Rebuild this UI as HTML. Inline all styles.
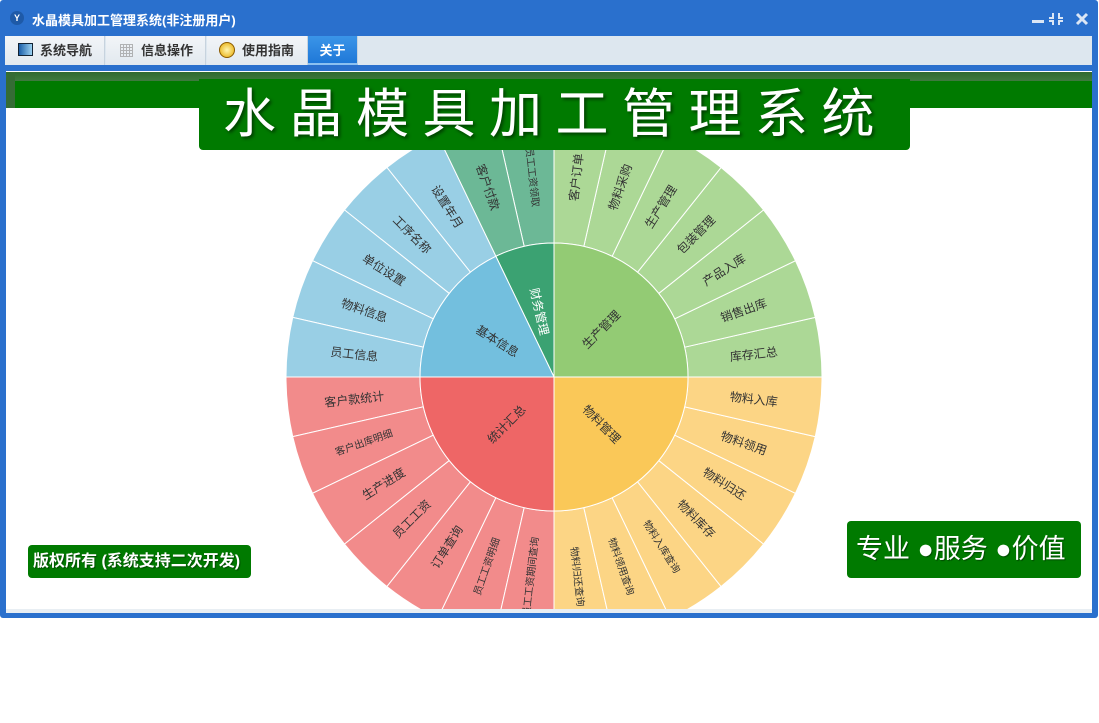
<!DOCTYPE html>
<html><head><meta charset="utf-8"><style>
*{margin:0;padding:0;box-sizing:border-box}
body{width:1099px;height:723px;background:#fff;position:relative;overflow:hidden;font-family:"Liberation Sans","Noto Sans CJK SC",sans-serif}
.win{position:absolute;left:0;top:0;width:1098px;height:618px;background:#2a70cd;border-radius:3px}
.title{position:absolute;left:32px;top:10px;color:#fff;font-size:13px;font-weight:bold}
.logo{position:absolute;left:10px;top:11px;width:14px;height:14px;border-radius:50%;background:#1e5aa8;color:#fff;font-size:9px;font-weight:bold;text-align:center;line-height:14px}
.tabs{position:absolute;left:5px;top:36px;width:1087px;height:29px;background:#dde7ef}
.tab{position:absolute;top:0;height:29px;background:linear-gradient(#f2f5f8,#e2e9ef);border-right:1px solid #c7d3de;font-size:13px;color:#333;line-height:29px;font-weight:bold}
.tab.act{background:linear-gradient(#3b95e8,#1f78d8);color:#fff;border-bottom:2px solid #8cc0f0}
.content{position:absolute;left:6px;top:71px;width:1086px;height:538px;background:#fff;overflow:hidden}
.strip{position:absolute;left:6px;top:609px;width:1086px;height:4px;background:#e8eef3}
.hbar{position:absolute;left:0;top:1px;width:1086px;height:36px;background:#007a00}
.hbar:before{content:"";position:absolute;left:0;top:0;width:1086px;height:9px;background:linear-gradient(#2f6a2f,#3f7a3f)}
.hbar:after{content:"";position:absolute;left:0;top:0;width:9px;height:36px;background:#356c35;border-top-left-radius:8px}
.tbox{position:absolute;left:199px;top:79px;width:711px;height:71px;background:#007a00;border-radius:0 0 4px 4px;color:#fff;font-size:53px;letter-spacing:13.5px;line-height:71px;padding-left:24px;text-shadow:2px 2px 3px rgba(0,0,0,.5);white-space:nowrap;overflow:hidden}
.badge{position:absolute;background:#007a00;color:#fff;border-radius:4px;white-space:nowrap;text-shadow:1px 1px 1px rgba(0,0,0,.4)}
svg text{font-family:"Liberation Sans","Noto Sans CJK SC",sans-serif;fill:#333;font-size:12px}
</style></head><body>
<div class="win">
<div class="logo">Y</div>
<div class="title">水晶模具加工管理系统(非注册用户)</div>
<svg style="position:absolute;left:1030px;top:12px" width="62" height="14" viewBox="0 0 62 14">
<rect x="2" y="8" width="12" height="3" fill="#dbe6f5"/>
<g fill="#dbe6f5"><rect x="22" y="1" width="2" height="5"/><rect x="19" y="5" width="5" height="2"/><rect x="28" y="1" width="2" height="5"/><rect x="28" y="5" width="5" height="2"/><rect x="22" y="8" width="2" height="5"/><rect x="19" y="8" width="5" height="2"/><rect x="28" y="8" width="2" height="5"/><rect x="28" y="8" width="5" height="2"/></g>
<path d="M47 2 L57 12 M57 2 L47 12" stroke="#dbe6f5" stroke-width="3"/>
</svg>
<div class="tabs">
<div class="tab" style="left:0;width:100px"><span style="position:absolute;left:13px;top:7px;width:15px;height:13px;border:1px solid #123;background:linear-gradient(90deg,#1a5ea8,#9ad0f0)"></span><span style="position:absolute;left:35px">系统导航</span></div>
<div class="tab" style="left:101px;width:100px"><span style="position:absolute;left:14px;top:8px;width:13px;height:13px;background:repeating-linear-gradient(90deg,#999 0 1px,transparent 1px 3px),repeating-linear-gradient(0deg,#999 0 1px,transparent 1px 3px);opacity:.7"></span><span style="position:absolute;left:35px">信息操作</span></div>
<div class="tab" style="left:202px;width:101px"><span style="position:absolute;left:12px;top:6px;width:16px;height:16px;border-radius:50%;background:radial-gradient(#fff6b0,#e6a800);border:1px solid #8a5a00"></span><span style="position:absolute;left:35px">使用指南</span></div>
<div class="tab act" style="left:303px;width:50px;text-align:center">关于</div>
</div>
</div>
<div class="content">
<svg style="position:absolute;left:-6px;top:-71px" width="1099" height="723">
<g transform="translate(554,377)" stroke="#fff" stroke-width="1">
<defs><path id="w" d="M268,0 A268,268 0 0 0 261.28,-59.64 L130.64,-29.82 A134,134 0 0 1 134,0 Z"/></defs>
<g fill="#acd896"><use href="#w" transform="rotate(0)"/><use href="#w" transform="rotate(-12.857)"/><use href="#w" transform="rotate(-25.714)"/><use href="#w" transform="rotate(-38.571)"/><use href="#w" transform="rotate(-51.429)"/><use href="#w" transform="rotate(-64.286)"/><use href="#w" transform="rotate(-77.143)"/></g>
<g fill="#6cb896"><use href="#w" transform="rotate(-90)"/><use href="#w" transform="rotate(-102.857)"/></g>
<g fill="#99cfe5"><use href="#w" transform="rotate(-115.714)"/><use href="#w" transform="rotate(-128.571)"/><use href="#w" transform="rotate(-141.429)"/><use href="#w" transform="rotate(-154.286)"/><use href="#w" transform="rotate(-167.143)"/></g>
<g fill="#f28b8b"><use href="#w" transform="rotate(-180)"/><use href="#w" transform="rotate(-192.857)"/><use href="#w" transform="rotate(-205.714)"/><use href="#w" transform="rotate(-218.571)"/><use href="#w" transform="rotate(-231.429)"/><use href="#w" transform="rotate(-244.286)"/><use href="#w" transform="rotate(-257.143)"/></g>
<g fill="#fcd585"><use href="#w" transform="rotate(-270)"/><use href="#w" transform="rotate(-282.857)"/><use href="#w" transform="rotate(-295.714)"/><use href="#w" transform="rotate(-308.571)"/><use href="#w" transform="rotate(-321.429)"/><use href="#w" transform="rotate(-334.286)"/><use href="#w" transform="rotate(-347.143)"/></g>
<path d="M0,0 L134,0 A134,134 0 0 0 0,-134 Z" fill="#93cb74"/>
<path d="M0,0 L0,-134 A134,134 0 0 0 -58.14,-120.73 Z" fill="#3ba272"/>
<path d="M0,0 L-58.14,-120.73 A134,134 0 0 0 -134,0 Z" fill="#73bfde"/>
<path d="M0,0 L-134,0 A134,134 0 0 0 0,134 Z" fill="#ee6666"/>
<path d="M0,0 L0,134 A134,134 0 0 0 134,0 Z" fill="#fac858"/>
</g>
<g transform="translate(554,377)" text-anchor="middle" dominant-baseline="central" stroke="none">
<text transform="rotate(-45) translate(67,0)">生产管理</text>
<text transform="rotate(-102.86) translate(67,0) rotate(180)" style="fill:#fff">财务管理</text>
<text transform="rotate(-147.86) translate(67,0) rotate(180)">基本信息</text>
<text transform="rotate(-225) translate(67,0) rotate(180)">统计汇总</text>
<text transform="rotate(45) translate(67,0)">物料管理</text>
<text transform="rotate(-6.43) translate(201,0)">库存汇总</text>
<text transform="rotate(-19.29) translate(201,0)">销售出库</text>
<text transform="rotate(-32.14) translate(201,0)">产品入库</text>
<text transform="rotate(-45) translate(201,0)">包装管理</text>
<text transform="rotate(-57.86) translate(201,0)">生产管理</text>
<text transform="rotate(-70.71) translate(201,0)">物料采购</text>
<text transform="rotate(-83.57) translate(201,0)">客户订单</text>
<text transform="rotate(-96.43) translate(201,0) rotate(180)" style="font-size:10px">员工工资领取</text>
<text transform="rotate(-109.29) translate(201,0) rotate(180)">客户付款</text>
<text transform="rotate(-122.14) translate(201,0) rotate(180)">设置年月</text>
<text transform="rotate(-135) translate(201,0) rotate(180)">工序名称</text>
<text transform="rotate(-147.86) translate(201,0) rotate(180)">单位设置</text>
<text transform="rotate(-160.71) translate(201,0) rotate(180)">物料信息</text>
<text transform="rotate(-173.57) translate(201,0) rotate(180)">员工信息</text>
<text transform="rotate(-186.43) translate(201,0) rotate(180)">客户款统计</text>
<text transform="rotate(-199.29) translate(201,0) rotate(180)" style="font-size:10px">客户出库明细</text>
<text transform="rotate(-212.14) translate(201,0) rotate(180)">生产进度</text>
<text transform="rotate(-225) translate(201,0) rotate(180)">员工工资</text>
<text transform="rotate(-237.86) translate(201,0) rotate(180)">订单查询</text>
<text transform="rotate(-250.71) translate(201,0) rotate(180)" style="font-size:10px">员工工资明细</text>
<text transform="rotate(-263.57) translate(201,0) rotate(180)" style="font-size:10px">员工工资期间查询</text>
<text transform="rotate(83.57) translate(201,0)" style="font-size:10px">物料归还查询</text>
<text transform="rotate(70.71) translate(201,0)" style="font-size:10px">物料领用查询</text>
<text transform="rotate(57.86) translate(201,0)" style="font-size:10px">物料入库查询</text>
<text transform="rotate(45) translate(201,0)">物料库存</text>
<text transform="rotate(32.14) translate(201,0)">物料归还</text>
<text transform="rotate(19.29) translate(201,0)">物料领用</text>
<text transform="rotate(6.43) translate(201,0)">物料入库</text>
</g>
</svg>
<div class="hbar"></div>
</div>
<div class="strip"></div>
<div class="tbox">水晶模具加工管理系统</div>
<div class="badge" style="left:28px;top:545px;width:223px;height:33px;font-size:16px;line-height:33px;padding-left:5px;font-weight:bold">版权所有 (系统支持二次开发)</div>
<div class="badge" style="left:847px;top:521px;width:234px;height:57px;font-size:27px;line-height:57px;padding-left:9px">专业 ●服务 ●价值</div>
</body></html>
